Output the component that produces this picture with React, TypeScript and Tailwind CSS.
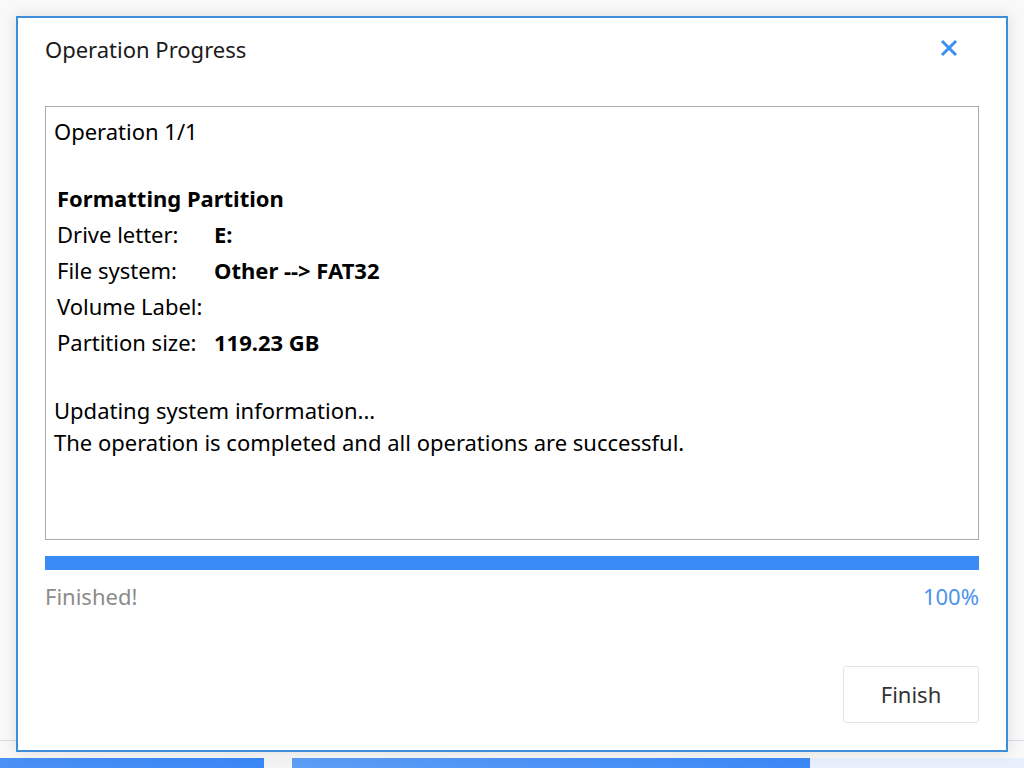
import React from 'react';

const rows: { label: string; value: string }[] = [
    { label: 'Drive letter:', value: 'E:' },
    { label: 'File system:', value: 'Other --> FAT32' },
    { label: 'Volume Label:', value: '' },
    { label: 'Partition size:', value: '119.23 GB' },
];

export default function App() {
    return (
        <main
            className="relative w-[1024px] h-[768px] overflow-hidden bg-[#f9f9f9]"
            style={{ fontFamily: '"Noto Sans", "Open Sans", sans-serif' }}
        >
            {/* Background app behind the dialog */}
            <div className="flex flex-col h-full">
                <div className="h-[740px]" />
                <div className="h-px bg-[#d5dde6]" />
                <div className="h-[17px]" />
                <div className="flex h-[10px]">
                    <div className="w-[264px] bg-gradient-to-r from-[#4a91f5] to-[#3a88f7]" />
                    <div className="w-[28px] bg-[#f4f4f4]" />
                    <div className="w-[518px] bg-gradient-to-r from-[#5d9ef6] to-[#3b89f7]" />
                    <div className="flex-1 bg-[#e7f0fc]" />
                </div>
            </div>

            {/* Dialog */}
            <div className="absolute left-[16px] top-[16px] w-[992px] h-[736px] border-2 border-[#3d8fdc] bg-white shadow-[0_0_14px_rgba(0,0,0,0.12)]">
                <div className="px-[27px]">
                    {/* Header */}
                    <div className="flex items-center justify-between pt-[16px] h-[45px]">
                        <h1 className="text-[22px] leading-[28px] text-[#1a1a1a]">Operation Progress</h1>
                        <button className="mr-[21px] mt-[-1px] text-[#3b8ef2]">
                            <svg width="18" height="18" viewBox="0 0 18 18">
                                <path d="M2 2 L16 16 M16 2 L2 16" stroke="currentColor" strokeWidth="3" />
                            </svg>
                        </button>
                    </div>

                    {/* Log box */}
                    <div className="mt-[43px] h-[434px] border border-[#ababab] pl-[8px] text-[22px] text-black">
                        <div className="leading-[36px] mt-[6px]">Operation 1/1</div>
                        <div className="mt-[31px] pl-[3px] leading-[36px]">
                            <div className="font-bold">Formatting Partition</div>
                            {rows.map((r) => (
                                <div key={r.label} className="flex">
                                    <span className="w-[157px]">{r.label}</span>
                                    <span className="font-bold">{r.value}</span>
                                </div>
                            ))}
                        </div>
                        <div className="mt-[34px] leading-[32px]">
                            <div>Updating system information...</div>
                            <div>The operation is completed and all operations are successful.</div>
                        </div>
                    </div>

                    {/* Progress */}
                    <div className="mt-[16px] h-[14px] bg-[#3a8bf6]" />
                    <div className="mt-[12px] flex justify-between text-[22px] leading-[28px]">
                        <span className="text-[#8c8c8c]">Finished!</span>
                        <span className="text-[#4b93ec]">100%</span>
                    </div>

                    {/* Footer */}
                    <div className="mt-[56px] flex justify-end">
                        <button className="w-[136px] h-[57px] border border-[#dfe4ea] rounded-[3px] text-[22px] text-[#333]">
                            Finish
                        </button>
                    </div>
                </div>
            </div>
        </main>
    );
}
